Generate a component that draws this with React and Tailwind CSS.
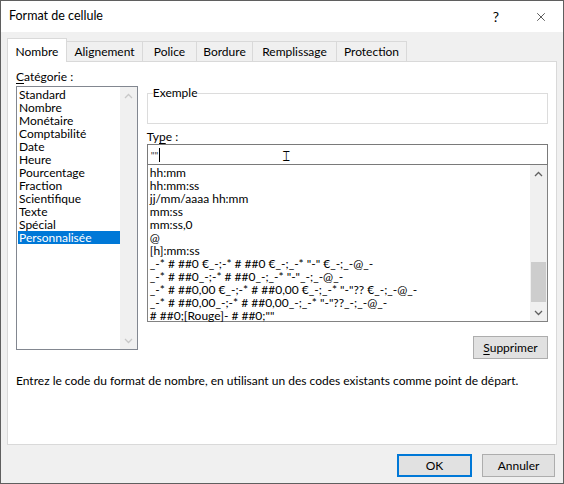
import { X } from "lucide-react";

const categories = [
  "Standard",
  "Nombre",
  "Monétaire",
  "Comptabilité",
  "Date",
  "Heure",
  "Pourcentage",
  "Fraction",
  "Scientifique",
  "Texte",
  "Spécial",
  "Personnalisée",
];

const formats = [
  "hh:mm",
  "hh:mm:ss",
  "jj/mm/aaaa hh:mm",
  "mm:ss",
  "mm:ss,0",
  "@",
  "[h]:mm:ss",
  '_-* # ##0 €_-;-* # ##0 €_-;_-* "-" €_-;_-@_-',
  '_-* # ##0_-;-* # ##0_-;_-* "-"_-;_-@_-',
  '_-* # ##0,00 €_-;-* # ##0,00 €_-;_-* "-"?? €_-;_-@_-',
  '_-* # ##0,00_-;-* # ##0,00_-;_-* "-"??_-;_-@_-',
  '# ##0;[Rouge]- # ##0;""',
];

const tabs = [
  { label: "Nombre", w: "w-[60px]" },
  { label: "Alignement", w: "w-[76px]" },
  { label: "Police", w: "w-[54px]" },
  { label: "Bordure", w: "w-[56px]" },
  { label: "Remplissage", w: "w-[84px]" },
  { label: "Protection", w: "w-[70px]" },
];

const Chevron = ({ up, color }) => (
  <svg width="9" height="6" viewBox="0 0 9 6">
    <path
      d={up ? "M1 5 L4.5 1.5 L8 5" : "M1 1 L4.5 4.5 L8 1"}
      fill="none"
      stroke={color}
      strokeWidth="1.3"
    />
  </svg>
);

const Scrollbar = ({ disabled, thumb }) => (
  <div className="w-[17px] h-full bg-[#f0f0f0] flex flex-col">
    <div className="h-[17px] flex items-center justify-center">
      <Chevron up color={disabled ? "#c8c8c8" : "#606060"} />
    </div>
    <div className="flex-1 flex flex-col">
      {thumb && (
        <>
          <div className="flex-1" />
          <div className="h-[40px] mx-[1px] bg-[#cdcdcd]" />
          <div className="h-[2px]" />
        </>
      )}
    </div>
    <div className="h-[17px] flex items-center justify-center">
      <Chevron color={disabled ? "#c8c8c8" : "#606060"} />
    </div>
  </div>
);

export default function App() {
  return (
    <div
      className="w-[564px] h-[484px] border border-[#5f5f5f] bg-[#f0f0f0] flex flex-col text-[12px] text-black"
      style={{ fontFamily: 'Lato, "Noto Sans", sans-serif' }}
    >
      {/* barre de titre */}
      <div className="h-[31px] bg-white flex items-center pl-[8px] shrink-0 text-[12.5px]">
        <span className="flex-1">Format de cellule</span>
        <span className="w-[20px] text-center text-[14px] mr-[28px]">?</span>
        <X className="w-[14px] h-[14px] mr-[15px]" strokeWidth={1.1} />
      </div>

      {/* onglets */}
      <div className="px-[6px] pt-[5px] flex items-end h-[29px] shrink-0">
        {tabs.map((t, i) =>
          i === 0 ? (
            <div
              key={t.label}
              className={`${t.w} h-[24px] pt-[2px] bg-white border border-b-0 border-[#d9d9d9] flex items-center justify-center relative z-10 -mb-px`}
            >
              {t.label}
            </div>
          ) : (
            <div
              key={t.label}
              className={`${t.w} h-[20px] bg-[#f0f0f0] border border-l-0 border-b-0 border-[#d9d9d9] flex items-center justify-center`}
            >
              {t.label}
            </div>
          )
        )}
      </div>

      {/* panneau */}
      <div className="mx-[6px] h-[384px] bg-white border border-[#d9d9d9] flex flex-col px-[8px] pt-[8px] shrink-0">
        <div className="flex gap-[9px]">
          <div className="w-[122px] flex flex-col">
            <div className="h-[16px] leading-[14px]">
              <span className="underline underline-offset-2">C</span>atégorie :
            </div>
            <div className="h-[264px] border border-[#828790] flex">
              <div className="flex-1 pt-[1px] pl-[1px]">
                {categories.map((c) => (
                  <div
                    key={c}
                    className={`h-[13px] leading-[13px] pl-[1px] ${
                      c === "Personnalisée" ? "bg-[#0078d7] text-white" : ""
                    }`}
                  >
                    {c}
                  </div>
                ))}
              </div>
              <Scrollbar disabled />
            </div>
          </div>

          <div className="w-[402px] flex flex-col pt-[16px]">
            <fieldset className="h-[38px] border border-[#dcdcdc] px-[5px]">
              <legend className="leading-[14px]">Exemple</legend>
            </fieldset>
            <div className="mt-[6px] h-[14px] leading-[14px]">
              Ty<span className="underline underline-offset-2">p</span>e :
            </div>
            <div className="h-[21px] border border-[#7a7a7a] flex items-center pl-[3px] relative">
              <span className="text-[10px] leading-none text-[#333]">""</span>
              <span className="w-[1px] h-[14px] bg-black ml-[1px]" />
              <span className="absolute left-[133px] top-[3px] text-[15px] leading-none font-light">𝙸</span>
            </div>
            <div className="h-[157px] border border-t-0 border-[#828282] flex">
              <div className="flex-1 pt-[1px] pl-[2px] whitespace-pre">
                {formats.map((f) => (
                  <div key={f} className="h-[13px] leading-[13px]">
                    {f}
                  </div>
                ))}
              </div>
              <Scrollbar thumb />
            </div>
            <div className="flex justify-end mt-[14px]">
              <button className="w-[75px] h-[23px] bg-[#e1e1e1] border border-[#adadad]">
                <span className="underline underline-offset-2">S</span>upprimer
              </button>
            </div>
          </div>
        </div>
        <div className="mt-[13px]">
          Entrez le code du format de nombre, en utilisant un des codes existants comme point de départ.
        </div>
      </div>

      {/* boutons */}
      <div className="flex justify-end gap-[10px] pr-[8px] pt-[9px]">
        <button className="w-[75px] h-[23px] bg-[#e1e1e1] border-2 border-[#0078d7]">OK</button>
        <button className="w-[73px] h-[23px] bg-[#e1e1e1] border border-[#adadad]">Annuler</button>
      </div>
    </div>
  );
}
